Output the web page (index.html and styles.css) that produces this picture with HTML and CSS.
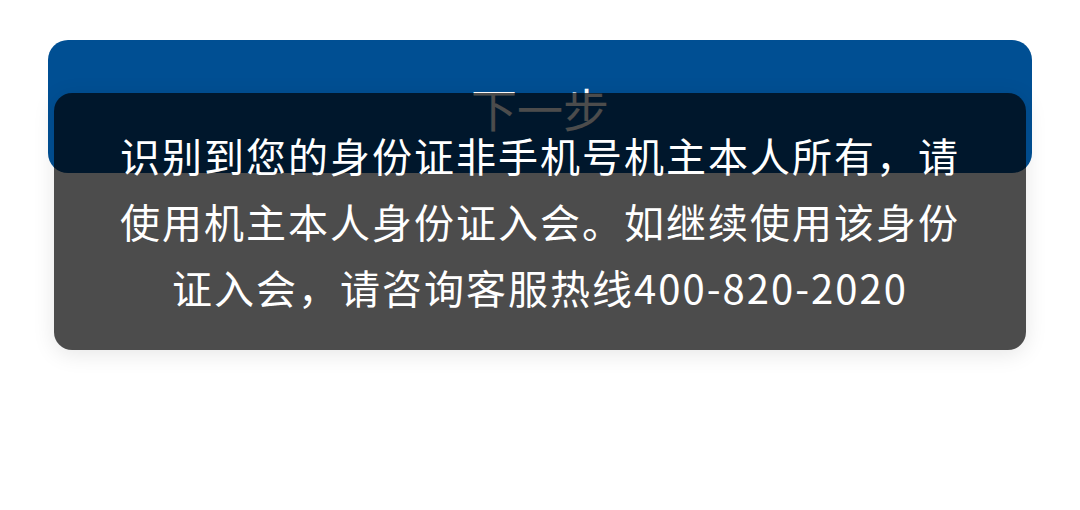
FILE: index.html
```html
<!DOCTYPE html>
<html lang="zh-CN">
<head>
<meta charset="utf-8">
<link rel="stylesheet" href="styles.css">
</head>
<body>
<div class="page">
  <button class="next-btn">下一步</button>
</div>
<div class="toast">
  <p class="toast-text">识别到您的身份证非手机号机主本人所有，请使用机主本人身份证入会。如继续使用该身份证入会，请咨询客服热线400-820-2020</p>
</div>
</body>
</html>
```
FILE: styles.css
```css
html, body {
  margin: 0;
  padding: 0;
  background: #ffffff;
  width: 1080px;
  height: 510px;
  overflow: hidden;
  font-family: "Noto Sans CJK SC", "Noto Sans", sans-serif;
}

.page {
  padding: 40px 48px 0;
  display: flex;
  flex-direction: column;
}

.next-btn {
  height: 133px;
  width: 100%;
  border: none;
  border-radius: 20px;
  background: #004f93;
  color: #ffffff;
  font-family: "Noto Sans CJK SC", "Noto Sans", sans-serif;
  font-size: 46px;
  line-height: 1;
  padding: 0;
}

.toast {
  position: absolute;
  left: 54px;
  top: 93px;
  width: 972px;
  box-sizing: border-box;
  padding: 29px 60px 30px;
  border-radius: 18px;
  background: rgba(0, 0, 0, 0.7);
  box-shadow: 0 4px 22px rgba(0, 0, 0, 0.10);
}

.toast-text {
  margin: 0 auto;
  max-width: 850px;
  color: #ffffff;
  font-size: 40px;
  line-height: 66px;
  letter-spacing: 2px;
  text-align: center;
}
```
